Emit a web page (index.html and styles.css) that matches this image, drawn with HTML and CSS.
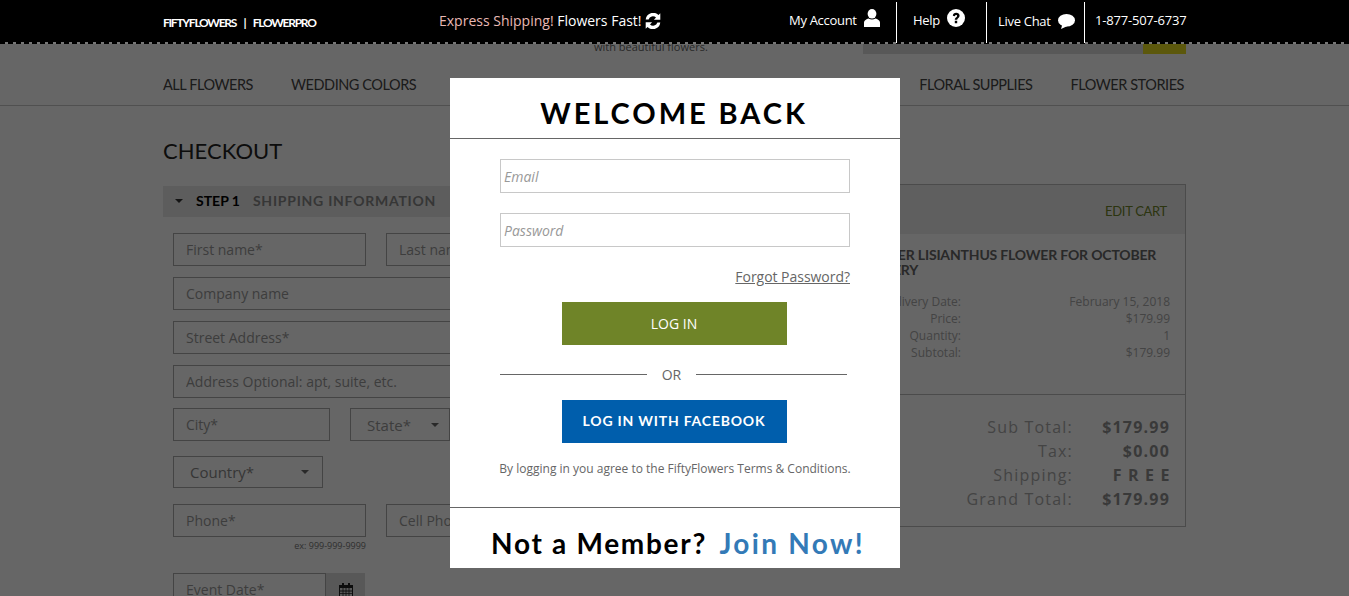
FILE: index.html
```html
<!DOCTYPE html>
<html lang="en">
<head>
  <meta charset="UTF-8">
  <title>FiftyFlowers Checkout</title>
  <link rel="stylesheet" href="styles.css">
</head>
<body>

  <header class="topbar">
    <div class="brand">FIFTYFLOWERS &nbsp;|&nbsp; FLOWERPRO</div>
    <div class="promo">
      <span class="promo-pink">Express Shipping!</span> Flowers Fast!
      <svg class="ico-refresh" viewBox="0 0 16 16"><path d="M13.500 2.100 L15.300 .3 V6.700 H8.900 L11 4.600 A4.500 4.500 0 0 0 3.600 6.400 H.7 A7.500 7.500 0 0 1 13.500 2.100 Z M2.500 13.900 L.7 15.700 V9.300 H7.100 L5 11.400 A4.500 4.500 0 0 0 12.400 9.600 H15.300 A7.500 7.500 0 0 1 2.500 13.900 Z" fill="#fff"/></svg>
    </div>
    <nav class="toplinks">
      <a class="toplink link-account">My Account
        <svg class="ico-user" viewBox="0 0 16 18"><ellipse cx="8" cy="4.800" rx="4.400" ry="4.800" fill="#fff"/><path d="M0 18 V13.500 C0 11.200 2.500 10.200 4.600 9.500 C6.500 10.800 9.500 10.800 11.400 9.500 C13.500 10.200 16 11.200 16 13.500 V18 Z" fill="#fff"/></svg>
      </a>
      <a class="toplink link-help">Help
        <svg class="ico-help" viewBox="0 0 18 18"><circle cx="9" cy="9" r="9" fill="#fff"/><path d="M5.800 6.800 C5.900 4.900 7.300 3.800 9.200 3.800 C11.100 3.800 12.600 5 12.600 6.700 C12.600 9 10.200 9.100 10.200 10.800 H7.800 C7.800 8.400 10.100 8.400 10.100 7 C10.100 6.400 9.700 6 9.100 6 C8.500 6 8.100 6.500 8 7.300 Z M7.800 11.800 H10.200 V14.200 H7.800 Z" fill="#000"/></svg>
      </a>
      <a class="toplink link-chat">Live Chat
        <svg class="ico-chat" viewBox="0 0 17 15"><ellipse cx="8.500" cy="6.300" rx="8.500" ry="6.300" fill="#fff"/><path d="M4.500 10 L3 15 L9.500 12 Z" fill="#fff"/></svg>
      </a>
      <span class="phone">1-877-507-6737</span>
    </nav>
  </header>

  <div class="page">
    <div class="subhead">
      <span class="tagline">with beautiful flowers.</span>
      <div class="searchbar"><span class="searchbtn"></span></div>
    </div>

    <nav class="mainnav">
      <div class="navgroup"><a>ALL FLOWERS</a><a>WEDDING COLORS</a></div>
      <div class="navgroup"><a>FLORAL SUPPLIES</a><a>FLOWER STORIES</a></div>
    </nav>

    <div class="wrap">
      <h2 class="pagetitle">CHECKOUT</h2>

      <div class="columns">
        <section class="checkout">
          <div class="stepbar">
            <span class="caret caret-dark"></span>
            <b class="stepnum">STEP 1</b>
            <span class="stepname">SHIPPING INFORMATION</span>
          </div>

          <div class="form">
            <div class="row">
              <input class="field half" placeholder="First name*">
              <input class="field half" placeholder="Last name*">
            </div>
            <input class="field full" placeholder="Company name">
            <input class="field full" placeholder="Street Address*">
            <input class="field full" placeholder="Address Optional: apt, suite, etc.">
            <div class="row row-city">
              <input class="field city" placeholder="City*">
              <div class="selectbox state">State*<span class="caret"></span></div>
            </div>
            <div class="row row-country">
              <div class="selectbox country">Country*<span class="caret"></span></div>
            </div>
            <div class="row row-phone">
              <div class="half">
                <input class="field half" placeholder="Phone*">
                <div class="hint">ex: 999-999-9999</div>
              </div>
              <input class="field half" placeholder="Cell Phone">
            </div>
            <div class="dategroup">
              <input class="field dateinput" placeholder="Event Date*">
              <span class="datebtn">
                <svg class="ico-cal" viewBox="0 0 14 14"><path d="M0 2 H14 V14 H0 Z M1 5 V13 H13 V5 Z M3 0 H5 V3 H3 Z M9 0 H11 V3 H9 Z M1 7.500 H13 V8.500 H1 Z M1 10.200 H13 V11 H1 Z M3.600 5 H4.400 V13 H3.600 Z M6.600 5 H7.400 V13 H6.600 Z M9.600 5 H10.400 V13 H9.600 Z" fill="#222"/></svg>
              </span>
            </div>
          </div>
        </section>

        <aside class="cart">
          <div class="carthead"><a class="editcart">EDIT CART</a></div>
          <div class="cartitem">
            <h4 class="itemtitle">SUMMER LISIANTHUS FLOWER FOR OCTOBER DELIVERY</h4>
            <dl class="itemdetails">
              <dt>Delivery Date:</dt><dd>February 15, 2018</dd>
              <dt>Price:</dt><dd>$179.99</dd>
              <dt>Quantity:</dt><dd>1</dd>
              <dt>Subtotal:</dt><dd>$179.99</dd>
            </dl>
          </div>
          <dl class="totals">
            <dt>Sub Total:</dt><dd>$179.99</dd>
            <dt>Tax:</dt><dd>$0.00</dd>
            <dt>Shipping:</dt><dd class="free">FREE</dd>
            <dt>Grand Total:</dt><dd>$179.99</dd>
          </dl>
        </aside>
      </div>
    </div>
  </div>

  <div class="overlay"></div>

  <div class="modal">
    <h1 class="modal-title">WELCOME BACK</h1>
    <div class="modal-body">
      <input class="modal-input" placeholder="Email">
      <input class="modal-input" placeholder="Password">
      <a class="forgot">Forgot Password?</a>
      <button class="btn btn-green">LOG IN</button>
      <div class="or"><span class="or-line"></span><span class="or-text">OR</span><span class="or-line or-line-right"></span></div>
      <button class="btn btn-blue">LOG IN WITH FACEBOOK</button>
      <p class="terms">By logging in you agree to the FiftyFlowers Terms &amp; Conditions.</p>
    </div>
    <div class="modal-foot">Not a Member? <a class="join">Join Now!</a></div>
  </div>

</body>
</html>
```

FILE: styles.css
```css
* {
  box-sizing: border-box;
}

body {
  margin: 0;
  height: 596px;
  overflow: hidden;
  font-family: "Open Sans", sans-serif;
  background: #fff;
  color: #222;
}

/* top bar */
.topbar {
  position: relative;
  z-index: 3;
  height: 44px;
  color: #fff;
  display: flex;
  padding-left: 163px;
  background:
    repeating-linear-gradient(90deg, #000 0 5px, #777 5px 8px) left bottom / 100% 2px no-repeat,
    #000;
}

.brand {
  width: 276px;
  padding-top: 15px;
  font-family: "Lato", sans-serif;
  font-size: 12px;
  font-weight: 700;
  letter-spacing: -1.25px;
  word-spacing: 2px;
}

.promo {
  width: 300px;
  padding-top: 11px;
  font-size: 14px;
}

.promo-pink {
  color: #e8b9b4;
}

.ico-refresh {
  width: 16px;
  height: 16px;
  vertical-align: -3px;
}

.toplinks {
  display: flex;
  margin-left: 50px;
}

.toplink {
  display: flex;
  align-items: flex-start;
  height: 41px;
  margin-top: 2px;
  padding-top: 9px;
  font-size: 13px;
  line-height: 18px;
  letter-spacing: -0.3px;
  border-right: 1px solid #fff;
}

.link-account { width: 108px; }
.link-help { width: 90px; padding-left: 16px; }
.link-chat { width: 98px; padding-left: 11px; padding-top: 10px; }

.ico-user {
  width: 16px;
  height: 18px;
  margin: -2px 0 0 7px;
}

.ico-help {
  width: 18px;
  height: 18px;
  margin: -2px 0 0 7px;
}

.ico-chat {
  width: 17px;
  height: 15px;
  margin: 2px 0 0 7px;
}

.phone {
  padding: 11px 0 0 10px;
  font-size: 13px;
  line-height: 18px;
  letter-spacing: -0.2px;
}

/* page behind the modal */
.subhead {
  height: 10px;
  display: flex;
  overflow: hidden;
  padding-left: 594px;
}

.tagline {
  width: 269px;
  font-size: 11px;
  line-height: 6px;
  color: #666;
}

.searchbar {
  width: 323px;
  background: #ddd;
  display: flex;
  justify-content: flex-end;
}

.searchbtn {
  width: 43px;
  background: #e5dc1f;
}

.mainnav {
  margin-top: 20px;
  height: 32px;
  padding: 0 165px 0 163px;
  border-bottom: 1px solid #c8c8c8;
  display: flex;
  justify-content: space-between;
  font-family: "Lato", sans-serif;
  font-size: 14.5px;
  line-height: 22px;
  letter-spacing: -0.45px;
  color: #444;
}

.navgroup {
  display: flex;
  gap: 38px;
}

.wrap {
  padding: 0 163px;
}

.pagetitle {
  margin: 32px 0 22px;
  font-family: "Lato", sans-serif;
  font-size: 22px;
  line-height: 26px;
  font-weight: 400;
  letter-spacing: 0.05px;
  color: #222;
}

.columns {
  display: flex;
  justify-content: space-between;
  align-items: flex-start;
}

.checkout {
  width: 430px;
  flex: none;
}

.stepbar {
  width: 600px;
  height: 31px;
  padding: 0 0 2px 12px;
  background: #e8e8e8;
  display: flex;
  align-items: center;
  font-family: "Lato", sans-serif;
  font-size: 14px;
}

.stepnum {
  margin-left: 13px;
  color: #000;
}

.stepname {
  margin-left: 13px;
  font-weight: 700;
  letter-spacing: 0.75px;
  color: #888;
}

.caret {
  width: 0;
  height: 0;
  border-left: 4px solid transparent;
  border-right: 4px solid transparent;
  border-top: 4px solid #666;
}

.caret-dark {
  border-top-color: #333;
}

.form {
  width: 600px;
  padding: 16px 0 0 10px;
  display: flex;
  flex-direction: column;
  gap: 11px;
}

.row {
  display: flex;
  gap: 20px;
}

.field, .selectbox {
  height: 33px;
  padding: 0 12px;
  border: 1px solid #aaa;
  background: #fff;
  font-family: "Open Sans", sans-serif;
  font-size: 14px;
  color: #999;
}

.field::placeholder {
  color: #999;
  opacity: 1;
}

.half { width: 193px; }
.full { width: 590px; }
.city { width: 157px; }

.row-city {
  margin-top: -1px;
}

.selectbox {
  display: flex;
  align-items: center;
  justify-content: space-between;
  font-size: 15px;
}

.state {
  width: 100px;
  padding: 0 10px 0 16px;
}

.row-country {
  margin-top: 4px;
}

.country {
  width: 150px;
  padding: 0 13px 0 16px;
  height: 32px;
  color: #888;
}

.row-phone {
  margin-top: 5px;
}

.hint {
  margin-top: 2px;
  text-align: right;
  font-size: 9px;
  line-height: 13px;
  color: #777;
}

.dategroup {
  margin-top: 10px;
  display: flex;
  width: 192px;
}

.dateinput {
  width: 153px;
}

.datebtn {
  width: 39px;
  height: 33px;
  background: #ddd;
  display: flex;
  align-items: center;
  justify-content: center;
}

.ico-cal {
  width: 14px;
  height: 14px;
}

/* order summary */
.cart {
  width: 348px;
  flex: none;
  margin-top: -2px;
  border: 1px solid #bbb;
  background: #fff;
}

.carthead {
  height: 49px;
  background: #eee;
  text-align: right;
  padding: 19px 18px 0 0;
  font-family: "Lato", sans-serif;
  font-size: 13px;
  line-height: 15px;
  letter-spacing: -0.3px;
}

.editcart {
  color: #6f8428;
}

.cartitem {
  height: 161px;
  padding: 13px 15px 0;
  border-bottom: 1px solid #bbb;
}

.itemtitle {
  margin: 0 0 16px;
  font-family: "Lato", sans-serif;
  font-size: 14px;
  line-height: 15px;
  font-weight: 700;
  letter-spacing: -0.17px;
  color: #666;
}

.itemdetails {
  margin: 0;
  display: grid;
  grid-template-columns: 107px 1fr;
  font-size: 12px;
  line-height: 17px;
  color: #aaa;
}

.itemdetails dt {
  text-align: right;
}

.itemdetails dd {
  margin: 0;
  text-align: right;
}

.totals {
  margin: 0;
  height: 131px;
  padding: 20px 15px 0 0;
  display: grid;
  grid-template-columns: 1fr 97px;
  align-content: start;
  font-size: 16px;
  line-height: 24px;
  letter-spacing: 1.2px;
  color: #aaa;
}

.totals dt {
  text-align: right;
}

.totals dd {
  margin: 0;
  text-align: right;
  font-weight: 700;
  color: #909090;
}

.totals dd.free {
  letter-spacing: 6.5px;
  margin-right: -6px;
}

/* overlay and login modal */
.overlay {
  position: fixed;
  inset: 0;
  z-index: 1;
  background: rgba(0, 0, 0, 0.6);
}

.modal {
  position: absolute;
  z-index: 2;
  top: 78px;
  left: 450px;
  width: 450px;
  height: 490px;
  background: #fff;
  display: flex;
  flex-direction: column;
}

.modal-title {
  margin: 0;
  height: 61px;
  padding-right: 2px;
  border-bottom: 1px solid #666;
  text-align: center;
  font-family: "Lato", sans-serif;
  font-size: 29px;
  line-height: 69px;
  font-weight: 700;
  letter-spacing: 2.95px;
  color: #000;
}

.modal-body {
  flex: 1;
  padding: 20px 50px 0;
  display: flex;
  flex-direction: column;
  align-items: center;
  border-bottom: 1px solid #666;
}

.modal-input {
  width: 350px;
  height: 34px;
  flex: none;
  margin-bottom: 20px;
  padding: 0 3px;
  border: 1px solid #c8c8c8;
  font-family: "Open Sans", sans-serif;
  font-size: 14px;
  font-style: italic;
}

.modal-input::placeholder {
  color: #999;
  opacity: 1;
}

.forgot {
  align-self: flex-end;
  font-size: 14px;
  line-height: 19px;
  letter-spacing: -0.03px;
  color: #666;
  text-decoration: underline;
}

.btn {
  width: 225px;
  height: 43px;
  flex: none;
  margin-right: 2px;
  border: none;
  color: #fff;
  cursor: pointer;
}

.btn-green {
  margin-top: 16px;
  background: #6f8428;
  font-family: "Open Sans", sans-serif;
  font-size: 14px;
}

.btn-blue {
  padding-bottom: 3px;
  background: #005eac;
  font-family: "Lato", sans-serif;
  font-size: 14px;
  font-weight: 700;
  letter-spacing: 0.8px;
}

.or {
  width: 350px;
  height: 55px;
  flex: none;
  padding-top: 4px;
  display: flex;
  align-items: center;
  color: #666;
  font-size: 14px;
}

.or-line {
  width: 147px;
  height: 1px;
  background: #666;
}

.or-line-right {
  width: 151px;
}

.or-text {
  width: 49px;
  text-align: center;
}

.terms {
  margin: 17px 0 0;
  font-size: 12px;
  line-height: 18px;
  white-space: nowrap;
  color: #666;
}

.modal-foot {
  height: 60px;
  padding-left: 6px;
  text-align: center;
  font-family: "Lato", sans-serif;
  font-size: 28px;
  line-height: 71px;
  font-weight: 700;
  letter-spacing: 1.7px;
  color: #000;
  white-space: nowrap;
}

.join {
  margin-left: 4px;
  letter-spacing: 2.3px;
  color: #337ab7;
}
```
